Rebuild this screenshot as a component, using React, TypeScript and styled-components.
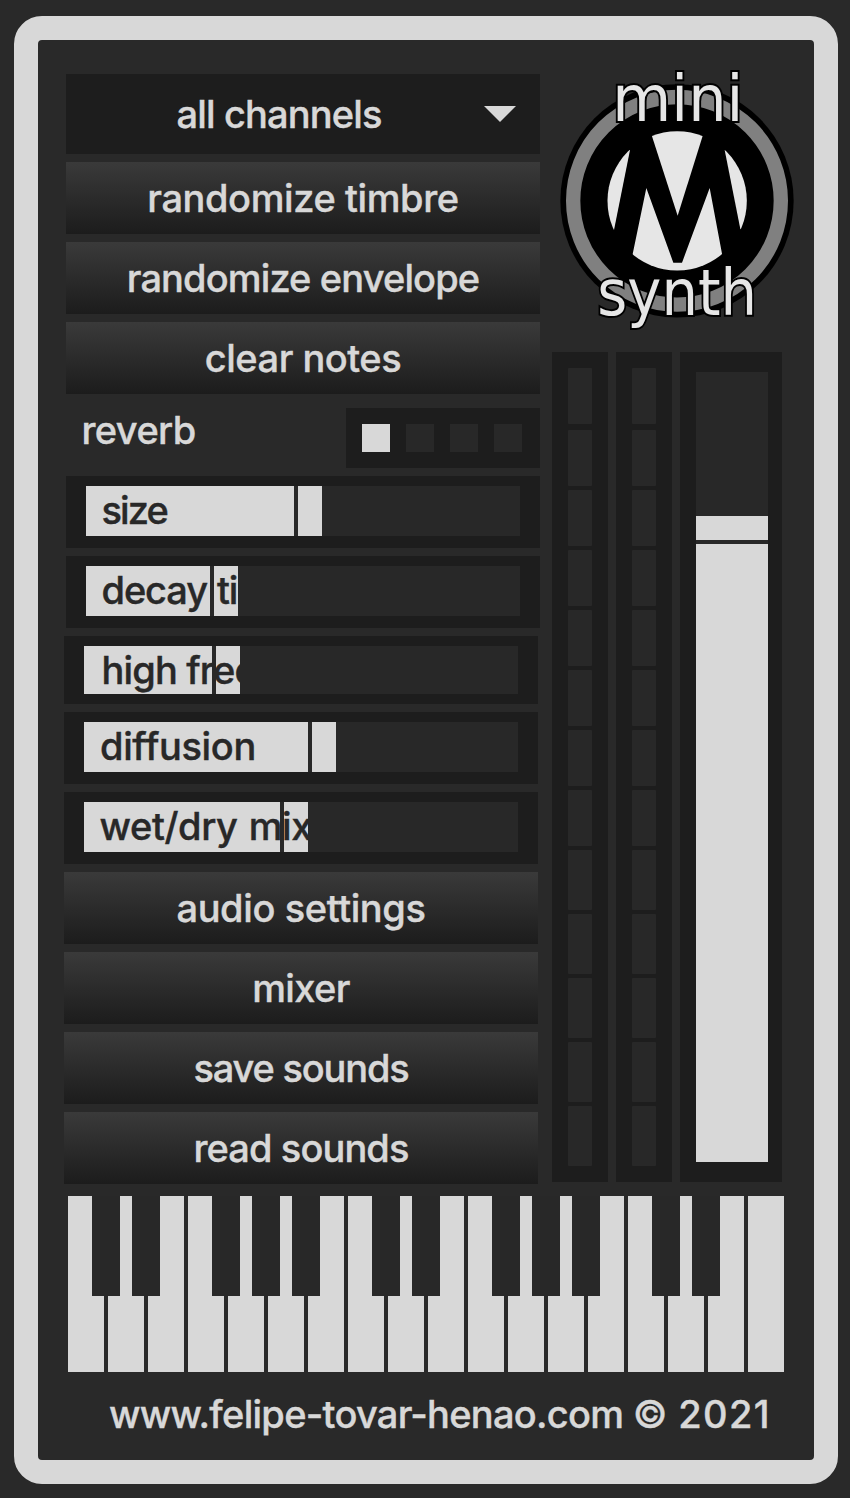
import React from 'react';
import styled, { createGlobalStyle } from 'styled-components';

const color = {
  bg: '#292929',
  well: '#1d1d1d',
  track: '#282828',
  light: '#d8d8d8',
};

const GlobalStyle = createGlobalStyle`
  * { box-sizing: border-box; }
  body { margin: 0; background: ${color.bg}; }
`;

const Page = styled.div`
  width: 850px;
  height: 1498px;
  padding: 16px 12px 14px 14px;
  background: ${color.bg};
  color: ${color.light};
  font: 500 38px 'Inter', sans-serif;
  white-space: nowrap;
`;

const Frame = styled.main`
  height: 1468px;
  border: 24px solid ${color.light};
  border-radius: 28px;
  padding: 34px 0 0 28px;
`;

const Upper = styled.div`
  display: flex;
  gap: 12px;
  height: 1110px;
`;

const Controls = styled.div`
  width: 474px;
  display: flex;
  flex-direction: column;
  gap: 8px;
`;

const LowerControls = styled.div`
  display: flex;
  flex-direction: column;
  gap: 8px;
  margin-left: -2px;
  width: 474px;
`;

const Text = styled.span<{ $track?: number; $word?: number }>`
  letter-spacing: ${p => p.$track ?? 0}px;
  word-spacing: ${p => p.$word ?? 0}px;
  -webkit-text-stroke: 0.4px currentColor;
`;

const Dropdown = styled.div`
  height: 80px;
  flex: none;
  display: grid;
  grid-template-columns: 1fr 32px;
  align-items: center;
  padding: 0 24px 0 8px;
  background: ${color.well};
  text-align: center;
  line-height: 80px;
`;

const Arrow = styled.svg`
  display: block;
  width: 32px;
  height: 16px;
`;

const Button = styled.button`
  appearance: none;
  border: 0;
  padding: 0;
  height: 72px;
  flex: none;
  background: linear-gradient(#3a3a3a, #1c1c1c);
  color: inherit;
  font: inherit;
  line-height: 72px;
  text-align: center;
`;

const ReverbRow = styled.div`
  height: 66px;
  flex: none;
  display: flex;
  justify-content: space-between;
  padding-left: 15.5px;
`;

const ReverbLabel = styled.div`
  line-height: 56px;
`;

const Tabs = styled.div`
  width: 194px;
  height: 60px;
  margin-top: 6px;
  padding: 16px;
  display: flex;
  gap: 16px;
  background: ${color.well};
`;

const Tab = styled.div<{ $on?: boolean }>`
  width: 28px;
  height: 28px;
  background: ${p => (p.$on ? color.light : color.track)};
`;

const SliderBox = styled.div<{ $h: number }>`
  height: ${p => p.$h}px;
  flex: none;
  padding: 10px 20px ${p => (p.$h === 68 ? 10 : 12)}px;
  background: ${color.well};
`;

const Track = styled.div`
  height: 100%;
  display: grid;
  background: ${color.track};
  overflow: hidden;
`;

const Level = styled.div`
  grid-area: 1 / 1;
  display: flex;
  gap: 4px;
`;

const Fill = styled.div<{ $w: number }>`
  width: ${p => p.$w}px;
  background: ${color.light};
`;

const SliderLabel = styled.div<{ $pad: number }>`
  grid-area: 1 / 1;
  padding-left: ${p => p.$pad}px;
  color: ${color.track};
  line-height: 48px;
`;

const Output = styled.div`
  display: flex;
  flex-direction: column;
`;

const Logo = styled.svg`
  display: block;
  width: 258px;
  height: 278px;
  flex: none;
  overflow: visible;
`;

const Meters = styled.div`
  display: flex;
  gap: 8px;
  height: 830px;
`;

const Meter = styled.div`
  width: 56px;
  padding: 16px;
  display: flex;
  flex-direction: column;
  background: ${color.well};
`;

const Segment = styled.div<{ $h: number; $gap: number }>`
  height: ${p => p.$h}px;
  margin-bottom: ${p => p.$gap}px;
  border-radius: 1px;
  background: ${color.track};
`;

const Fader = styled.div`
  width: 102px;
  padding: 20px 14px 20px 16px;
  background: ${color.well};
`;

const FaderTrack = styled.div`
  height: 790px;
  padding-top: 144px;
  display: flex;
  flex-direction: column;
  gap: 4px;
  background: ${color.track};
`;

const FaderThumb = styled.div`
  height: 24px;
  background: ${color.light};
`;

const FaderFill = styled.div`
  flex: 1;
  background: ${color.light};
`;

const Piano = styled.div`
  position: relative;
  margin: 12px 0 0 2px;
  height: 176px;
  display: flex;
  gap: 4px;
`;

const WhiteKey = styled.div`
  width: 36px;
  background: ${color.light};
`;

const BlackKey = styled.div<{ $after: number }>`
  position: absolute;
  top: 0;
  left: ${p => p.$after * 40 + 24}px;
  width: 28px;
  height: 100px;
  background: ${color.track};
`;

const Credit = styled.footer`
  width: 748px;
  line-height: 84px;
  text-align: center;
`;

type SliderProps = {
  label: string;
  value: number;
  track: number;
  pad: number;
  word?: number;
  height?: number;
};

function Slider({ label, value, track, pad, word, height = 72 }: SliderProps) {
  return (
    <SliderBox $h={height}>
      <Track>
        <Level>
          <Fill $w={value} />
          <Fill $w={24} />
        </Level>
        <SliderLabel $pad={pad}>
          <Text $track={track} $word={word}>{label}</Text>
        </SliderLabel>
      </Track>
    </SliderBox>
  );
}

const segments: [number, number][] = [
  [56, 6], [56, 4], [56, 4], [56, 4], [56, 4], [56, 4], [56, 4],
  [56, 4], [60, 4], [60, 4], [60, 4], [60, 4], [60, 0],
];

const blackKeys = [0, 1, 3, 4, 5, 7, 8, 10, 11, 12, 14, 15];

function LevelMeter() {
  return (
    <Meter>
      {segments.map(([h, gap], i) => (
        <Segment key={i} $h={h} $gap={gap} />
      ))}
    </Meter>
  );
}

function SynthLogo() {
  return (
    <Logo viewBox="36 72 774 834">
      <defs>
        <clipPath id="disc">
          <circle cx="411.5" cy="452.5" r="209" />
        </clipPath>
      </defs>
      <circle cx="411" cy="452.5" r="350" fill="#000" />
      <circle cx="411" cy="452.5" r="311.5" fill="none" stroke="#808080" strokeWidth="43" />
      <g clipPath="url(#disc)" fill="#e6e6e6">
        <path d="M413 497 317 200H506Z" />
        <path d="M270 300 222 540 180 560V280Z" />
        <path d="M554 300 601 537 650 560V280Z" />
        <path d="M319 414 265 675H558L509 414 426 638H400Z" />
      </g>
      <g
        fontFamily="'DejaVu Sans', sans-serif"
        fontWeight="400"
        fontSize="191"
        fill="#e6e6e6"
        stroke="#000"
        strokeWidth="12"
        paintOrder="stroke"
      >
        <text x="217" y="214" textLength="393" lengthAdjust="spacingAndGlyphs">mini</text>
        <text x="172" y="795" textLength="479" lengthAdjust="spacingAndGlyphs">synth</text>
      </g>
    </Logo>
  );
}

export default function App() {
  return (
    <Page>
      <GlobalStyle />
      <Frame>
        <Upper>
          <Controls>
            <Dropdown>
              <Text $track={-0.85}>all channels</Text>
              <Arrow viewBox="0 0 32 16">
                <path d="M0 0H32L16 16Z" fill={color.light} />
              </Arrow>
            </Dropdown>
            <Button><Text $track={-0.4}>randomize timbre</Text></Button>
            <Button><Text $track={-0.87}>randomize envelope</Text></Button>
            <Button><Text $track={-0.5}>clear notes</Text></Button>
            <ReverbRow>
              <ReverbLabel><Text $track={-0.6}>reverb</Text></ReverbLabel>
              <Tabs>
                <Tab $on />
                <Tab />
                <Tab />
                <Tab />
              </Tabs>
            </ReverbRow>
            <Slider label="size" value={208} track={-1.9} pad={15.5} />
            <Slider label="decay time" value={124} track={-1.1} pad={15.5} word={1} />
            <LowerControls>
              <Slider label="high freq" value={128} track={-0.85} pad={17.5} height={68} />
              <Slider label="diffusion" value={224} track={-0.35} pad={16} />
              <Slider label="wet/dry mix" value={196} track={-0.4} pad={15.5} word={1.5} />
              <Button><Text $track={-0.4}>audio settings</Text></Button>
              <Button><Text $track={-0.6}>mixer</Text></Button>
              <Button><Text $track={-1.2}>save sounds</Text></Button>
              <Button><Text $track={-0.9}>read sounds</Text></Button>
            </LowerControls>
          </Controls>
          <Output>
            <SynthLogo />
            <Meters>
              <LevelMeter />
              <LevelMeter />
              <Fader>
                <FaderTrack>
                  <FaderThumb />
                  <FaderFill />
                </FaderTrack>
              </Fader>
            </Meters>
          </Output>
        </Upper>
        <Piano>
          {Array.from({ length: 18 }, (_, i) => (
            <WhiteKey key={i} />
          ))}
          {blackKeys.map(k => (
            <BlackKey key={k} $after={k} />
          ))}
        </Piano>
        <Credit>
          <Text $track={-0.72}>www.felipe-tovar-henao.com ©</Text>
          <Text $track={1.4}> 2021</Text>
        </Credit>
      </Frame>
    </Page>
  );
}
